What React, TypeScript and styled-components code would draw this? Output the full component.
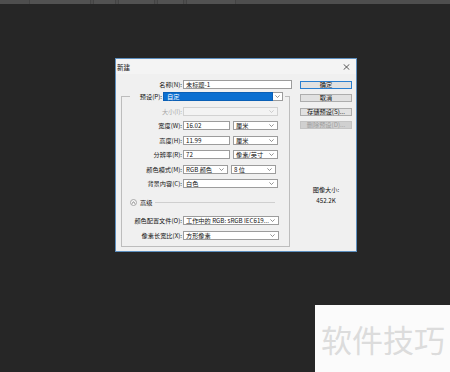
import React from "react";
import styled, { createGlobalStyle } from "styled-components";

const GlobalStyle = createGlobalStyle`
  html, body {
    margin: 0;
    padding: 0;
    background: #262626;
  }
  body {
    font-family: "Noto Sans CJK SC", "Noto Sans", "Liberation Sans", sans-serif;
  }
`;

const Chevron = ({ color = "#666" }: { color?: string }) => (
  <svg width="5" height="3" viewBox="0 0 5 3">
    <path d="M0.4 0.4 L2.5 2.5 L4.6 0.4" fill="none" stroke={color} strokeWidth="0.7" />
  </svg>
);

const CloseIcon = () => (
  <svg width="7" height="6" viewBox="0 0 7 6">
    <path d="M0.6 0.3 L6.4 5.7 M6.4 0.3 L0.6 5.7" stroke="#333" strokeWidth="0.8" />
  </svg>
);

const CaretUp = () => (
  <svg width="5" height="4" viewBox="0 0 5 4">
    <path d="M0.8 2.6 L2.5 1 L4.2 2.6" fill="none" stroke="#444" strokeWidth="0.7" />
  </svg>
);

const App = () => {
  return (
    <Page>
      <GlobalStyle />
      <TopStrip>
        <Tab $w={60} />
        <Tab $w={21} />
        <Tab $w={35} />
        <Tab $w={25} />
        <Tab $w={48} />
      </TopStrip>

      <Dialog>
        <TitleBar>
          <span>新建</span>
          <CloseIcon />
        </TitleBar>

        <Body>
          <LeftCol>
            <NameRow>
              <Label>名称(N):</Label>
              <TextInput>未标题-1</TextInput>
            </NameRow>

            <Frame>
              <PresetRow>
                <Label>预设(P):</Label>
                <PresetSelect>
                  <PresetValue>自定</PresetValue>
                  <PresetArrow>
                    <Chevron />
                  </PresetArrow>
                </PresetSelect>
              </PresetRow>

              <FieldRow $mt={6}>
                <Label $disabled>大小(I):</Label>
                <Select $w={95} $disabled>
                  <span />
                  <Chevron color="#bbb" />
                </Select>
              </FieldRow>

              <FieldRow $mt={5.4}>
                <Label>宽度(W):</Label>
                <Controls>
                  <TextInput $w={47}>16.02</TextInput>
                  <Select $w={45}>
                    <span>厘米</span>
                    <Chevron />
                  </Select>
                </Controls>
              </FieldRow>

              <FieldRow $mt={5.4}>
                <Label>高度(H):</Label>
                <Controls>
                  <TextInput $w={47}>11.99</TextInput>
                  <Select $w={45}>
                    <span>厘米</span>
                    <Chevron />
                  </Select>
                </Controls>
              </FieldRow>

              <FieldRow $mt={5.4}>
                <Label>分辨率(R):</Label>
                <Controls>
                  <TextInput $w={47}>72</TextInput>
                  <Select $w={45}>
                    <span>像素/英寸</span>
                    <Chevron />
                  </Select>
                </Controls>
              </FieldRow>

              <FieldRow $mt={5.4}>
                <Label>颜色模式(M):</Label>
                <Controls>
                  <Select $w={45}>
                    <span>RGB 颜色</span>
                    <Chevron />
                  </Select>
                  <Select $w={45}>
                    <span>8 位</span>
                    <Chevron />
                  </Select>
                </Controls>
              </FieldRow>

              <FieldRow $mt={5.4}>
                <Label>背景内容(C):</Label>
                <Select $w={95}>
                  <span>白色</span>
                  <Chevron />
                </Select>
              </FieldRow>

              <AdvancedRow>
                <RoundButton>
                  <CaretUp />
                </RoundButton>
                <AdvancedText>高级</AdvancedText>
                <Rule />
              </AdvancedRow>

              <FieldRow $mt={8}>
                <Label>颜色配置文件(O):</Label>
                <Select $w={96}>
                  <span>工作中的 RGB: sRGB IEC619...</span>
                  <Chevron />
                </Select>
              </FieldRow>

              <FieldRow $mt={6}>
                <Label>像素长宽比(X):</Label>
                <Select $w={96}>
                  <span>方形像素</span>
                  <Chevron />
                </Select>
              </FieldRow>
            </Frame>
          </LeftCol>

          <RightCol>
            <Button $mt={7} $primary>确定</Button>
            <Button $mt={5.3}>取消</Button>
            <Button $mt={5.3}>存储预设(S)...</Button>
            <Button $mt={5.3} $disabled>删除预设(D)...</Button>
            <SizeInfo>
              <div>图像大小:</div>
              <div>452.2K</div>
            </SizeInfo>
          </RightCol>
        </Body>
      </Dialog>

      <Watermark>软件技巧</Watermark>
    </Page>
  );
};

const Page = styled.div`
  position: relative;
  width: 450px;
  height: 372px;
  overflow: hidden;
  background: #262626;
`;

const TopStrip = styled.div`
  height: 4px;
  background: #4e4e4e;
  display: flex;
  gap: 2px;
  padding-left: 29px;
`;

const Tab = styled.div<{ $w: number }>`
  width: ${(p) => p.$w}px;
  height: 4px;
  border-left: 1px solid #444;
  border-right: 1px solid #444;
  background: #525252;
`;

const Dialog = styled.div`
  margin: 54px 0 0 115px;
  width: 242px;
  height: 194px;
  box-sizing: border-box;
  border: 1px solid #5d8fbf;
  background: #f0f0f0;
  display: flex;
  flex-direction: column;
`;

const TitleBar = styled.div`
  height: 15px;
  display: flex;
  align-items: center;
  justify-content: space-between;
  padding: 0 6px 0 1px;
  background: #f4f4f4;
  font-size: 6.5px;
  color: #111;
`;

const Body = styled.div`
  display: grid;
  grid-template-columns: 177px 52px;
  column-gap: 7px;
  align-items: start;
`;

const LeftCol = styled.div`
  display: flex;
  flex-direction: column;
`;

const RightCol = styled.div`
  display: flex;
  flex-direction: column;
`;

const Label = styled.div<{ $disabled?: boolean }>`
  font-size: 6.2px;
  line-height: 9px;
  text-align: right;
  white-space: nowrap;
  color: ${(p) => (p.$disabled ? "#a8a8a8" : "#111")};
`;

const NameRow = styled.div`
  margin-top: 6px;
  height: 9px;
  display: grid;
  grid-template-columns: 66px 109px;
  column-gap: 1px;
`;

const TextInput = styled.div<{ $w?: number }>`
  width: ${(p) => (p.$w ? `${p.$w}px` : "auto")};
  height: 9px;
  box-sizing: border-box;
  border: 1px solid #9c9c9c;
  background: #fff;
  padding-left: 2px;
  font-size: 6.2px;
  line-height: 7px;
  color: #111;
  white-space: nowrap;
`;

const Frame = styled.div`
  margin: 7px 0 0 5px;
  width: 169px;
  height: 151px;
  box-sizing: border-box;
  border: 1px solid #bdbdbd;
  display: flex;
  flex-direction: column;
`;

const PresetRow = styled.div`
  margin: -5px 0 0 8px;
  width: 155px;
  height: 9px;
  background: #f0f0f0;
  display: grid;
  grid-template-columns: 32px 120px;
  column-gap: 1px;
`;

const PresetSelect = styled.div`
  display: flex;
  height: 9px;
`;

const PresetValue = styled.div`
  width: 110px;
  box-sizing: border-box;
  background: #0a6fd1;
  border: 1px solid #0a5fb5;
  color: #fff;
  font-size: 6.2px;
  line-height: 7px;
  padding-left: 3px;
`;

const PresetArrow = styled.div`
  width: 10px;
  box-sizing: border-box;
  border: 1px solid #9c9c9c;
  border-left: none;
  background: #fff;
  display: flex;
  align-items: center;
  justify-content: center;
`;

const FieldRow = styled.div<{ $mt: number }>`
  margin-top: ${(p) => p.$mt}px;
  height: 9px;
  display: grid;
  grid-template-columns: 60px auto;
  column-gap: 1px;
  justify-content: start;
`;

const Controls = styled.div`
  display: flex;
  gap: 3px;
`;

const Select = styled.div<{ $w: number; $disabled?: boolean }>`
  width: ${(p) => p.$w}px;
  height: 9px;
  box-sizing: border-box;
  border: 1px solid ${(p) => (p.$disabled ? "#d2d2d2" : "#9c9c9c")};
  background: ${(p) => (p.$disabled ? "#f3f3f3" : "#fff")};
  display: flex;
  align-items: center;
  justify-content: space-between;
  padding: 0 3px 0 2px;
  font-size: 6.2px;
  color: #111;
  white-space: nowrap;
  overflow: hidden;
`;

const AdvancedRow = styled.div`
  margin-top: 10px;
  height: 10px;
  display: flex;
  align-items: center;
  padding-left: 8px;
  padding-right: 14px;
`;

const RoundButton = styled.div`
  width: 7px;
  height: 7px;
  box-sizing: border-box;
  border: 1px solid #a8a8a8;
  border-radius: 50%;
  background: #f7f7f7;
  display: flex;
  align-items: center;
  justify-content: center;
`;

const AdvancedText = styled.span`
  margin-left: 3px;
  font-size: 6.2px;
  color: #111;
`;

const Rule = styled.div`
  flex: 1;
  height: 1px;
  margin-left: 3px;
  background: #cfcfcf;
`;

const Button = styled.div<{ $mt: number; $primary?: boolean; $disabled?: boolean }>`
  margin-top: ${(p) => p.$mt}px;
  height: 8px;
  box-sizing: border-box;
  border: 1px solid ${(p) => (p.$primary ? "#2a7fd0" : p.$disabled ? "#c4c4c4" : "#adadad")};
  background: ${(p) => (p.$disabled ? "#d0d0d0" : "#e1e1e1")};
  color: ${(p) => (p.$disabled ? "#9d9d9d" : "#111")};
  font-size: 6.2px;
  line-height: 6px;
  text-align: center;
  white-space: nowrap;
`;

const SizeInfo = styled.div`
  margin-top: 55.6px;
  font-size: 6.2px;
  line-height: 11px;
  text-align: center;
  color: #111;
`;

const Watermark = styled.div`
  position: absolute;
  left: 315px;
  top: 305px;
  width: 135px;
  height: 67px;
  box-sizing: border-box;
  padding-left: 6px;
  background: #fbfbfb;
  display: flex;
  align-items: center;
  font-size: 31px;
  color: #dcdcdc;
  white-space: nowrap;
`;

export default App;
